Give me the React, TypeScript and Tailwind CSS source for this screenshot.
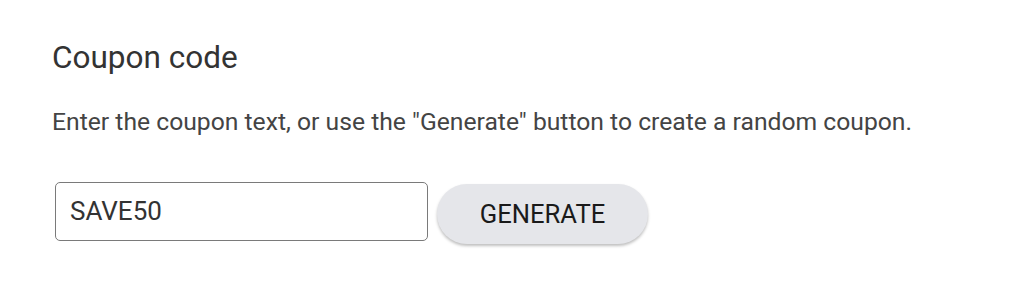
export default function App() {
  return (
    <div className="w-[1024px] h-[295px] bg-white pl-[52px] pt-[40px]" style={{ fontFamily: "Roboto, 'Liberation Sans', sans-serif" }}>
      <h2 className="text-[31.5px] leading-[36px] text-[#333333] font-normal">Coupon code</h2>
      <p className="mt-[30px] text-[24.7px] leading-[32px] text-[#444444]">
        Enter the coupon text, or use the "Generate" button to create a random coupon.
      </p>
      <div className="mt-[44px] flex items-start gap-[9px] pl-[3px]">
        <div className="w-[373px] h-[59px] border border-[#7a7a7a] rounded-[5px] flex items-center px-[14px] text-[26px] text-[#333333]">
          SAVE50
        </div>
        <button className="w-[211px] h-[60px] rounded-full bg-[#e5e6ea] text-[25.6px] text-[#1a1a1a] shadow-[0_2px_3px_rgba(0,0,0,0.25)] mt-[2px]">
          GENERATE
        </button>
      </div>
    </div>
  );
}
